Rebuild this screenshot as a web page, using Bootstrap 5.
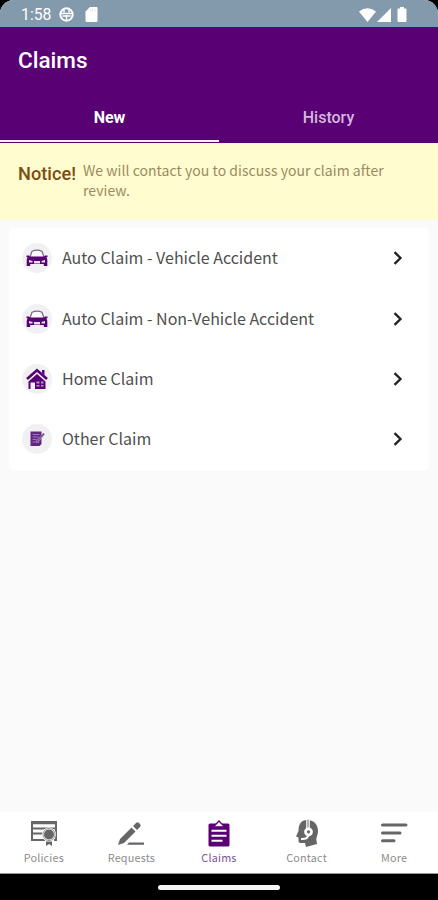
<!DOCTYPE html>
<html lang="en">
<head>
<meta charset="utf-8">
<meta name="viewport" content="width=device-width, initial-scale=1">
<title>Claims</title>
<link href="https://cdn.jsdelivr.net/npm/bootstrap@5.3.0/dist/css/bootstrap.min.css" rel="stylesheet">
<style>
:root{--purple:#5a0075;--src:"Noto Sans CJK JP","Noto Sans",sans-serif}
body{background:#000;font-family:Roboto,sans-serif;height:900px;overflow:hidden}
svg{display:block;flex:none}
.screen{height:874px;background:#fafafa;border-radius:14px 14px 0 0;overflow:hidden}
.statusbar{height:27px;background:#8399ac;padding:2px 31px 0 21px;font-size:15.8px}
.sd-icon{margin-left:11px}
.battery-icon{margin-left:6px}
.app-head{background:var(--purple);height:116px}
.app-title{font-size:22.5px;font-weight:500;line-height:28px;padding:19px 18px 0;height:65px;margin:0}
.tabs .nav-link{height:50px;padding:2px 0 0;line-height:48px;color:#d3b8dc;font-size:16px;font-weight:500;border-bottom:2px solid transparent;border-radius:0}
.tabs .nav-link.active{color:#fff;border-color:#f4ecf6;font-weight:700}
.notice{background:#fffccf;height:77px;padding:18px 18px 0;gap:6px}
.notice strong{font-size:18.2px;font-weight:500;line-height:26px;color:#7d4d10;width:59px}
.notice p{font-family:var(--src);font-size:14px;line-height:20px;color:#9b8b61;width:320px;letter-spacing:.04px;margin-top:-1px}
.claims{margin:8px 9px 0;border-radius:5px;background:#fff;height:243px}
.claims .list-group-item{height:60.4px;padding:0 26px 0 13px;border:0;gap:10px;font-family:var(--src);font-size:16px;line-height:22px;color:#505050;background:none}
.claims .item-label{padding-bottom:2px}
.disc{width:30px;height:30px;background:#f1f0f2;flex:none}
.bottom-nav{height:62px;background:#fff;border-bottom:1px solid #999}
.bottom-nav .nav-link{padding:7px 0 0;color:#8d8d8d;font-family:var(--src);font-size:10.8px;line-height:16px;gap:2px;letter-spacing:.2px}
.bottom-nav .nav-link svg{color:#666}
.bottom-nav .nav-link.active{color:#82539a}
.bottom-nav .nav-link.active svg{color:var(--purple)}
.gesture-bar{height:26px}
.home-pill{width:122px;height:5px;background:#f5f5f5}
</style>
<script src="https://cdn.jsdelivr.net/npm/bootstrap@5.3.0/dist/js/bootstrap.bundle.min.js"></script>
</head>
<body>
<div class="screen d-flex flex-column">
  <div class="statusbar d-flex align-items-center text-white">
    <span>1:58</span>
    <svg class="ms-2" width="15" height="15" viewBox="0 0 15 15" fill="none" stroke="#fff" stroke-width="2"><circle cx="7.5" cy="7.5" r="6.2"/><path d="M1.500 6.500h12M7.500 8v5M3.500 9h8M5 2.500v3M10 2.500v3" stroke-width="1.400"/></svg>
    <svg class="sd-icon" width="13" height="15" viewBox="0 0 13 15" fill="#fff"><path d="M5 0h6.500a1 1 0 0 1 1 1v13a1 1 0 0 1-1 1h-10a1 1 0 0 1-1-1V4.500z"/><path d="M5 2v2.500M7.500 2v2.500M10 2v2.500" stroke="#d5dde3" stroke-width=".8"/></svg>
    <svg class="ms-auto" width="17" height="14" viewBox="0 0 17 14" fill="#fff"><path d="M0 3.500Q8.500-3 17 3.500L8.500 14z"/></svg>
    <svg width="15" height="14" viewBox="0 0 15 14" fill="#fff"><path d="M15 0v14H1z"/></svg>
    <svg class="battery-icon" width="10" height="15" viewBox="0 0 10 15" fill="#fff"><path d="M3 0h4v1.500h1.500a1 1 0 0 1 1 1V14a1 1 0 0 1-1 1h-7a1 1 0 0 1-1-1V2.500a1 1 0 0 1 1-1H3z"/></svg>
  </div>
  <header class="app-head">
    <h1 class="app-title text-white">Claims</h1>
    <nav class="tabs nav nav-fill nav-justified">
      <a class="nav-link active" href="#">New</a>
      <a class="nav-link" href="#">History</a>
    </nav>
  </header>
  <div class="notice d-flex align-items-start">
    <strong>Notice!</strong>
    <p class="mb-0">We will contact you to discuss your claim after review.</p>
  </div>
  <main class="claims list-group list-group-flush">
    <a class="list-group-item d-flex align-items-center" href="#"><span class="disc rounded-circle d-flex align-items-center justify-content-center"><svg width="22" height="18" viewBox="0 0 22 18"><path d="M4 8L6 2.200Q11 .2 16 2.200L18 8" fill="#fafafa" stroke="#77658a" stroke-width="1.200"/><path d="M.5 6.500h2.500L4 7.500h14l1-1h2.500v1.500l-1.200.5q1 1 1 2.500v6h-3.500V15H4.200v2H.7v-6q0-1.500 1-2.500L.5 8z" fill="#5a0075"/><path d="M3 11l3.500 1v1.500H3zM19 11l-3.500 1v1.500H19zM8 12h6v2.500H8z" fill="#e8dfee"/></svg></span><span class="item-label">Auto Claim - Vehicle Accident</span><svg class="ms-auto" width="10" height="14" viewBox="0 0 10 14" fill="none" stroke="#222" stroke-width="2.300"><path d="M1.500 1.200L7.500 7l-6 5.800"/></svg></a>
    <a class="list-group-item d-flex align-items-center" href="#"><span class="disc rounded-circle d-flex align-items-center justify-content-center"><svg width="22" height="18" viewBox="0 0 22 18"><path d="M4 8L6 2.200Q11 .2 16 2.200L18 8" fill="#fafafa" stroke="#77658a" stroke-width="1.200"/><path d="M.5 6.500h2.500L4 7.500h14l1-1h2.500v1.500l-1.200.5q1 1 1 2.500v6h-3.500V15H4.200v2H.7v-6q0-1.500 1-2.500L.5 8z" fill="#5a0075"/><path d="M3 11l3.500 1v1.500H3zM19 11l-3.500 1v1.500H19zM8 12h6v2.500H8z" fill="#e8dfee"/></svg></span><span class="item-label">Auto Claim - Non-Vehicle Accident</span><svg class="ms-auto" width="10" height="14" viewBox="0 0 10 14" fill="none" stroke="#222" stroke-width="2.300"><path d="M1.500 1.200L7.500 7l-6 5.800"/></svg></a>
    <a class="list-group-item d-flex align-items-center" href="#"><span class="disc rounded-circle d-flex align-items-center justify-content-center"><svg width="22" height="22" viewBox="0 0 22 22"><path d="M1 11L11 2.200 21 11" fill="none" stroke="#5a0075" stroke-width="2.600"/><path d="M16 2h2.500v5L16 5zM2.500 13.500L11 6l8.500 7.500V21H9v-6.500H4.500V21h-2z" fill="#5a0075"/><path d="M10.500 13.500h3v2h-3zM15 13.500h2.500v2H15zM10.500 17h3v1.500h-3zM15 17h2.500v1.500H15z" fill="#b394c3"/></svg></span><span class="item-label">Home Claim</span><svg class="ms-auto" width="10" height="14" viewBox="0 0 10 14" fill="none" stroke="#222" stroke-width="2.300"><path d="M1.500 1.200L7.500 7l-6 5.800"/></svg></a>
    <a class="list-group-item d-flex align-items-center" href="#"><span class="disc rounded-circle d-flex align-items-center justify-content-center"><svg width="16" height="16" viewBox="0 0 16 16"><path d="M1.500.5h11v12.500l-2 2h-9z" fill="#612583"/><path d="M3.500 3.500h7M3.500 6h6M3.500 8.500h4M3.500 11h5" stroke="#9d7bb0" stroke-width="1"/><path d="M15 3L9 9.500l-.7 2" fill="none" stroke="#c9b8d4" stroke-width="2.400"/><path d="M15 2.500L9 9.500l-.7 2" fill="none" stroke="#76528f" stroke-width="1.700"/></svg></span><span class="item-label">Other Claim</span><svg class="ms-auto" width="10" height="14" viewBox="0 0 10 14" fill="none" stroke="#222" stroke-width="2.300"><path d="M1.500 1.200L7.500 7l-6 5.800"/></svg></a>
  </main>
  <nav class="bottom-nav nav nav-fill nav-justified mt-auto">
    <a class="nav-link d-flex flex-column align-items-center" href="#"><svg width="28" height="28" viewBox="0 0 28 28" fill="none" stroke="currentColor" stroke-width="2"><path d="M15 21H2V3h24v18h-2" /><path d="M2 4h24" stroke-width="2.500"/><path d="M2 9.500h23M2 14.500h11" stroke-width="2.200"/><circle cx="19" cy="15.500" r="7" fill="#fff" stroke="none"/><circle cx="19" cy="15.500" r="5" fill="currentColor" stroke="none"/><circle cx="19" cy="15.500" r="6" stroke-width=".7"/><path d="M16 22.500h6v4.500l-3-2-3 2z" fill="currentColor" stroke="none"/></svg>Policies</a>
    <a class="nav-link d-flex flex-column align-items-center" href="#"><svg width="28" height="28" viewBox="0 0 28 28" fill="currentColor"><path d="M1 26l2-6L14.500 8.500l4 4L7 24zM16 7l3-3q1.500-1.500 3 0l1 1q1.500 1.500 0 3l-3 3zM12 23.500h15v2.300H10z"/></svg>Requests</a>
    <a class="nav-link active d-flex flex-column align-items-center" href="#"><svg width="28" height="28" viewBox="0 0 28 28"><path d="M5 4.500h18a1.500 1.500 0 0 1 1.500 1.500v20a1.500 1.500 0 0 1-1.500 1.500H5A1.500 1.500 0 0 1 3.500 26V6A1.500 1.500 0 0 1 5 4.500z" fill="currentColor"/><path d="M8.500 7.800L14 2l5.500 5.800z" fill="#fff" stroke="currentColor" stroke-width="1.300"/><path d="M6.500 11.700h15M6.500 16.700h15M6.500 21.700h11" stroke="#fff" stroke-width="2"/></svg>Claims</a>
    <a class="nav-link d-flex flex-column align-items-center" href="#"><svg width="28" height="28" viewBox="0 0 28 28"><path d="M14 1C21 1 25 5.500 25 12c0 4-1.700 6-1.700 8.500l.7 4.500-11 3-1-4H7.500q-2 0-2-2v-3.500L3 17.500 5.500 12C5.500 5.500 8 1 14 1z" fill="currentColor"/><path d="M15 .5v9" stroke="#fff" stroke-width="3.600"/><path d="M15 .5v8" stroke="currentColor" stroke-width="1"/><circle cx="15.500" cy="12.800" r="3" fill="currentColor" stroke="#fff" stroke-width="2.800"/><path d="M15.500 16q-1 4.500-7.500 4" fill="none" stroke="#fff" stroke-width="2"/></svg>Contact</a>
    <a class="nav-link d-flex flex-column align-items-center" href="#"><svg width="28" height="28" viewBox="0 0 28 28" fill="none" stroke="currentColor" stroke-width="3" stroke-linecap="round"><path d="M2.500 6h23.500M2.500 14h17.500M2.500 21.800h11.500"/></svg>More</a>
  </nav>
</div>
<div class="gesture-bar d-flex justify-content-center align-items-center"><div class="home-pill rounded-pill"></div></div>
</body>
</html>
